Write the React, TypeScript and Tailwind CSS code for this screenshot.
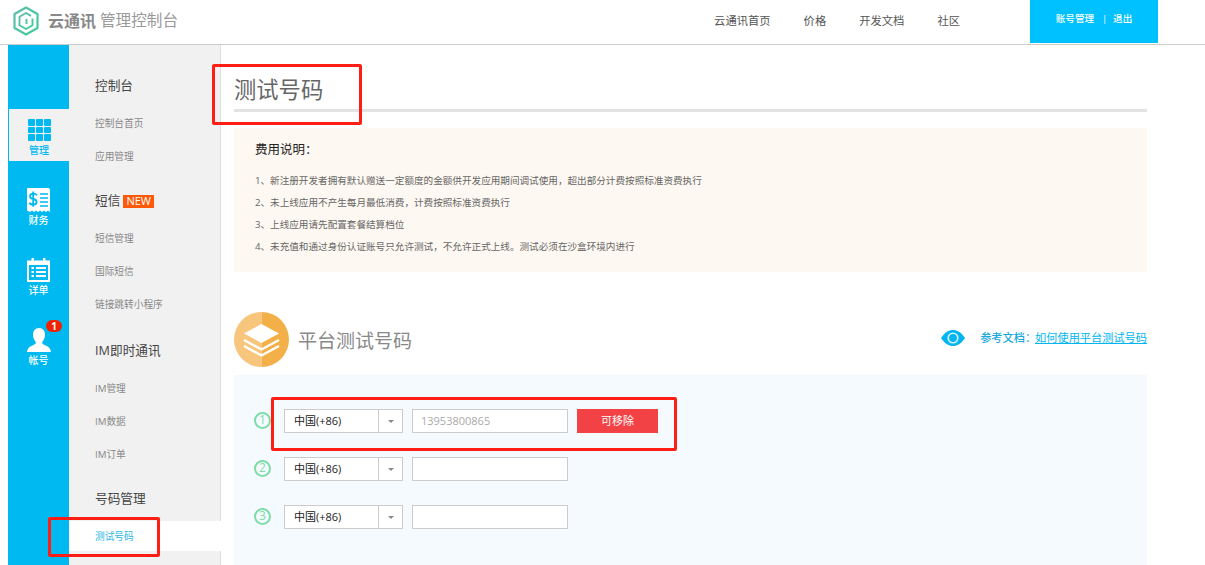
const navLinks = ["云通讯首页", "价格", "开发文档", "社区"];

const menuGroups = [
  { title: "控制台", items: ["控制台首页", "应用管理"], gap: "mb-[12px]" },
  { title: "短信", badge: "NEW", items: ["短信管理", "国际短信", "链接跳转小程序"], gap: "mb-[14px]" },
  { title: "IM即时通讯", items: ["IM管理", "IM数据", "IM订单"], gap: "mb-[12px]" },
];

const notes = [
  "1、新注册开发者拥有默认赠送一定额度的金额供开发应用期间调试使用，超出部分计费按照标准资费执行",
  "2、未上线应用不产生每月最低消费，计费按照标准资费执行",
  "3、上线应用请先配置套餐结算档位",
  "4、未充值和通过身份认证账号只允许测试，不允许正式上线。测试必须在沙盒环境内进行",
];

const Logo = () => (
  <svg width="26" height="30" viewBox="0 0 26 30" fill="none">
    <defs>
      <linearGradient id="logoGrad" x1="0" y1="0" x2="1" y2="1">
        <stop offset="0" stopColor="#5cbcae" />
        <stop offset="1" stopColor="#40cc9a" />
      </linearGradient>
    </defs>
    <path d="M13 1.5 L24.5 8 V22 L13 28.5 L1.5 22 V8 Z" stroke="url(#logoGrad)" strokeWidth="2.2" strokeLinejoin="round" />
    <path d="M18 9.8 L13 7 L6.5 10.8 V19.2 L13 23 L19.5 19.2 V12.5 M13.5 13 V18" stroke="url(#logoGrad)" strokeWidth="1.9" strokeLinejoin="round" />
  </svg>
);

const GridIcon = () => (
  <div className="mb-[2px] grid grid-cols-[7px_7px_7px] gap-px">
    {Array.from({ length: 9 }).map((_, i) => (
      <div key={i} className="h-[6.5px] w-[7px] rounded-[1px] bg-[#00b9f1]" />
    ))}
  </div>
);

const BillIcon = () => (
  <svg width="23" height="24" viewBox="0 0 23 24">
    <path d="M1 0 H21 Q23 0 23 2 V24 L21 22.6 L19 24 L17 22.6 L15 24 L13 22.6 L11 24 L9 22.6 L7 24 L5 22.6 L3 24 L0 22.6 V1 Q0 0 1 0 Z" fill="#fff" />
    <path d="M13 6 H21 M13 10 H21 M13 14 H21 M13 18 H21" stroke="#00b9f1" strokeWidth="1.6" />
    <path d="M10 7.4 Q9 5.6 6.2 5.6 Q3 5.6 3 8.2 Q3 10.4 6.2 11 Q9.6 11.6 9.6 14 Q9.6 16.6 6.2 16.6 Q3.2 16.6 2.4 14.6 M6.2 3.6 V18.8" fill="none" stroke="#00b9f1" strokeWidth="1.8" />
  </svg>
);

const CalendarIcon = () => (
  <svg width="23" height="24" viewBox="0 0 23 24">
    <rect x="1" y="3.5" width="21" height="19.5" fill="none" stroke="#fff" strokeWidth="2" />
    <rect x="1" y="3" width="21" height="4" fill="#fff" />
    <rect x="4.5" y="0" width="2.4" height="5" fill="#fff" />
    <rect x="16" y="0" width="2.4" height="5" fill="#fff" />
    <path d="M4.5 10 H7 M9 10 H19 M4.5 14 H7 M9 14 H19 M4.5 18 H7 M9 18 H19" stroke="#fff" strokeWidth="1.8" />
  </svg>
);

const UserIcon = () => (
  <svg width="24" height="24" viewBox="0 0 24 24">
    <path d="M12 0 C16 0 18 3 18 6.8 C18 10 16.5 12.6 15.2 14 C15 15.6 16 16.4 18 17.2 C21 18.3 23.4 19.6 24 24 H0 C0.6 19.6 3 18.3 6 17.2 C8 16.4 9 15.6 8.8 14 C7.5 12.6 6 10 6 6.8 C6 3 8 0 12 0 Z" fill="#fff" />
  </svg>
);

const LayersIcon = () => (
  <svg width="55" height="55" viewBox="0 0 55 55">
    <path d="M27.5 0 A27.5 27.5 0 0 0 27.5 55 Z" fill="#f7c67c" />
    <path d="M27.5 0 A27.5 27.5 0 0 1 27.5 55 Z" fill="#f3b048" />
    <path d="M27.5 12 L45 21.5 L27.5 31 L10 21.5 Z" fill="#fff" />
    <path d="M10 28 L27.5 37.5 L45 28" fill="none" stroke="#fff" strokeWidth="2.4" />
    <path d="M10 34 L27.5 43.5 L45 34" fill="none" stroke="#fff" strokeWidth="2.4" />
  </svg>
);

const EyeIcon = () => (
  <svg width="24" height="16" viewBox="0 0 24 16">
    <path d="M0 8 C4 2 8 0 12 0 C16 0 20 2 24 8 C20 14 16 16 12 16 C8 16 4 14 0 8 Z" fill="#00b5f0" />
    <circle cx="12" cy="8" r="5.6" fill="#d6f3fd" />
    <circle cx="12" cy="8" r="3.9" fill="#00b5f0" />
  </svg>
);

const RailItem = ({ icon, label, wrap, badge }: { icon: React.ReactNode; label: string; wrap: string; badge?: string }) => (
  <div className={`relative flex flex-col items-center ${wrap}`}>
    {icon}
    <span className="flex h-4 items-center text-[10px] font-medium">{label}</span>
    {badge && (
      <span className="absolute top-[19px] left-[38px] flex h-[12px] w-4 items-center justify-center rounded-full bg-[#ee2200] text-[10px] font-bold text-white">
        {badge}
      </span>
    )}
  </div>
);

const PhoneRow = ({ num, value, action }: { num: number; value?: string; action?: string }) => (
  <div className="flex h-6 items-center">
    <span className="mb-[2px] flex h-[17px] w-[17px] items-center justify-center rounded-full border-2 border-[#7edcaa] text-[12px] font-medium text-[#7edcaa]">
      {num}
    </span>
    <div className="ml-[13px] flex h-6 w-[119px] border border-[#cccccc] bg-white">
      <span className="flex flex-1 items-center pl-[9px] text-[11px] text-[#222222]">中国(+86)</span>
      <span className="flex w-6 items-center justify-center border-l border-[#cccccc]">
        <span className="h-0 w-0 border-x-[3.5px] border-t-[3.5px] border-x-transparent border-t-[#888888]" />
      </span>
    </div>
    <div className="ml-[9px] flex h-6 w-[156px] items-center border border-[#cccccc] bg-white pl-2 text-[11px] text-[#aaaaaa]">
      {value}
    </div>
    {action && (
      <button className="ml-[9px] h-6 w-[81px] bg-[#f34245] text-[11px] text-white">{action}</button>
    )}
  </div>
);

export default function App() {
  return (
    <div className="relative h-[565px] w-[1205px] overflow-hidden bg-white font-['Open_Sans','Noto_Sans_CJK_SC',sans-serif]">
      <header className="flex h-[45px] border-b border-[#cccccc]">
        <div className="ml-[13px] flex h-[41px] items-center">
          <Logo />
          <span className="ml-[9px] text-base font-bold text-[#888888]">云通讯</span>
          <span className="ml-[4px] text-[15.6px] text-[#999999]">管理控制台</span>
        </div>
        <nav className="ml-auto flex h-[43px] items-center gap-[33px] text-[11.3px] text-[#555555]">
          {navLinks.map((link) => (
            <a key={link}>{link}</a>
          ))}
        </nav>
        <div className="mr-[47px] ml-[70px] flex h-[43px] w-[128px] items-center justify-center gap-[8px] bg-[#00c1ff] pb-1 text-[9.6px] font-medium text-white">
          <span>账号管理</span>
          <span className="w-[3px]">|</span>
          <span>退出</span>
        </div>
      </header>

      <div className="ml-2 flex h-[520px]">
        <aside className="flex w-[61px] flex-col bg-[#00b9f1] pt-[64px] text-white">
          <div className="ml-px bg-[#f1f1f1] text-[#00b9f1]">
            <RailItem icon={<GridIcon />} label="管理" wrap="h-[52px] pt-[10px]" />
          </div>
          <RailItem icon={<BillIcon />} label="财务" wrap="h-[70px] pt-[27px]" />
          <RailItem icon={<CalendarIcon />} label="详单" wrap="h-[70px] pt-[27px]" />
          <RailItem icon={<UserIcon />} label="帐号" wrap="h-[70px] pt-[27px]" badge="1" />
        </aside>

        <div className="w-[152px] border-r border-[#dddddd] bg-[#f1f1f1] pt-[24px]">
          {menuGroups.map((group) => (
            <div key={group.title} className={group.gap}>
              <div className="mb-[3px] flex h-[34px] items-center pl-[26px] text-[12.7px] text-[#444444]">
                {group.title}
                {group.badge && (
                  <span className="ml-[3px] flex h-[13px] items-center bg-[#ff5a0a] px-[3px] text-[11px] text-white">
                    {group.badge}
                  </span>
                )}
              </div>
              {group.items.map((item) => (
                <div key={item} className="flex h-[33px] items-center pt-1 pl-[26px] text-[9.7px] text-[#888888]">
                  {item}
                </div>
              ))}
            </div>
          ))}
          <div className="mb-[5px] flex h-[34px] items-center pl-[26px] text-[12.7px] text-[#444444]">号码管理</div>
          <div className="relative -mr-px flex h-[30px] items-center bg-white pt-[2px] pl-[26px] text-[9.7px] text-[#29b6e8]">
            测试号码
          </div>
        </div>

        <main className="w-[984px] pr-[58px] pl-[13px]">
          <div className="flex h-[67px] items-end border-b-[3px] border-[#e3e3e3] pb-[3px] text-[22.3px] text-[#666666]">
            测试号码
          </div>

          <section className="mt-[16px] h-[144px] bg-[#fdf8f1] pt-[11px] pl-[21px]">
            <h2 className="flex h-[22px] items-center text-[12.5px] text-[#222222]">费用说明：</h2>
            <ul className="mt-[9px] text-[9.6px] text-[#666666]">
              {notes.map((note) => (
                <li key={note} className="flex h-[22px] items-center">
                  {note}
                </li>
              ))}
            </ul>
          </section>

          <section className="mt-[40px] flex h-[55px] items-center">
            <LayersIcon />
            <h2 className="ml-[9px] pt-[3px] text-[19px] text-[#888888]">平台测试号码</h2>
            <div className="ml-auto flex items-center pb-[3px] text-[11.2px] text-[#1aa8e0]">
              <EyeIcon />
              <span className="ml-[15px] font-medium">参考文档：</span>
              <a className="ml-[-1px] text-[#00b5f0] underline">如何使用平台测试号码</a>
            </div>
          </section>

          <section className="mt-[8px] flex h-[190px] flex-col gap-[24px] bg-[#f5fafe] pt-[34px] pl-[20px]">
            <PhoneRow num={1} value="13953800865" action="可移除" />
            <PhoneRow num={2} />
            <PhoneRow num={3} />
          </section>
        </main>
      </div>

      <div className="absolute top-[64px] left-[212px] h-[61px] w-[150px] rounded-[2px] border-[3px] border-[#fe1e14]" />
      <div className="absolute top-[397px] left-[271px] h-[54px] w-[406px] rounded-[2px] border-[3px] border-[#fe1e14]" />
      <div className="absolute top-[517px] left-[48px] h-[40px] w-[112px] rounded-[2px] border-[3px] border-[#fe1e14]" />
    </div>
  );
}
